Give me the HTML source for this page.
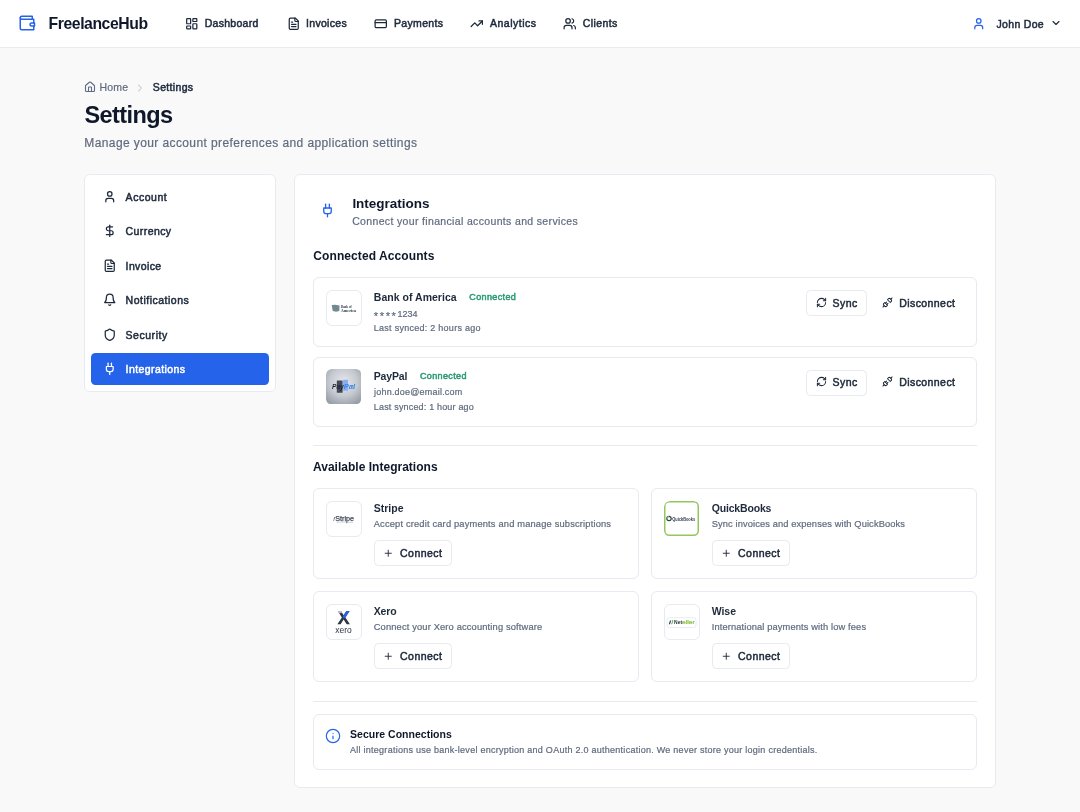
<!DOCTYPE html>
<html><head><meta charset="utf-8"><title>FreelanceHub - Settings</title>
<style>
html,body{margin:0;padding:0}
body{width:1080px;height:812px;position:relative;overflow:hidden;background:#f9f9fa;font-family:"Liberation Sans",sans-serif}
#root{position:absolute;left:0;top:0;width:1080px;height:812px;will-change:transform}
.t{position:absolute;white-space:nowrap}
.b{position:absolute}
.i{position:absolute;overflow:visible}
.logo{width:36px;height:36px;box-sizing:border-box;border:1px solid #e7eaf0;border-radius:6px;background:#fff;overflow:hidden}
</style></head><body>
<div id="root">
<div class="b" style="left:0px;top:0px;width:1080px;height:47px;background:#fff"></div>
<div class="b" style="left:0px;top:47px;width:1080px;height:1px;background:#e8eaef"></div>
<svg class="i" style="left:18.1px;top:14.4px;width:18px;height:18px" viewBox="0 0 24 24" fill="none" stroke="#2563eb" stroke-width="2" stroke-linecap="round" stroke-linejoin="round"><path d="M21 12V7H5a2 2 0 0 1 0-4h14v4"/><path d="M3 5v14a2 2 0 0 0 2 2h16v-5"/><path d="M18 12a2 2 0 0 0 0 4h4v-4Z"/></svg>
<div class="t" style="left:48.60px;top:15.57px;font-size:15.75px;line-height:15.75px;color:#0f172a;font-weight:700;letter-spacing:-0.432px;">FreelanceHub</div>
<svg class="i" style="left:185.2px;top:16.5px;width:13.5px;height:13.5px" viewBox="0 0 24 24" fill="none" stroke="#1e293b" stroke-width="2.2" stroke-linecap="round" stroke-linejoin="round"><rect width="7" height="9" x="3" y="3" rx="1"/><rect width="7" height="5" x="14" y="3" rx="1"/><rect width="7" height="9" x="14" y="12" rx="1"/><rect width="7" height="5" x="3" y="16" rx="1"/></svg>
<div class="t" style="left:204.70px;top:18.31px;font-size:10.5px;line-height:10.5px;color:#1e293b;font-weight:400;letter-spacing:0.279px;-webkit-text-stroke:0.5px #1e293b;">Dashboard</div>
<svg class="i" style="left:286.7px;top:16.5px;width:13.5px;height:13.5px" viewBox="0 0 24 24" fill="none" stroke="#1e293b" stroke-width="2.2" stroke-linecap="round" stroke-linejoin="round"><path d="M15 2H6a2 2 0 0 0-2 2v16a2 2 0 0 0 2 2h12a2 2 0 0 0 2-2V7Z"/><path d="M14 2v4a2 2 0 0 0 2 2h4"/><path d="M10 9H8"/><path d="M16 13H8"/><path d="M16 17H8"/></svg>
<div class="t" style="left:306.00px;top:18.31px;font-size:10.5px;line-height:10.5px;color:#1e293b;font-weight:400;letter-spacing:0.313px;-webkit-text-stroke:0.5px #1e293b;">Invoices</div>
<svg class="i" style="left:373.5px;top:16.5px;width:13.5px;height:13.5px" viewBox="0 0 24 24" fill="none" stroke="#1e293b" stroke-width="2.2" stroke-linecap="round" stroke-linejoin="round"><rect width="20" height="14" x="2" y="5" rx="2"/><line x1="2" x2="22" y1="10" y2="10"/></svg>
<div class="t" style="left:394.00px;top:18.31px;font-size:10.5px;line-height:10.5px;color:#1e293b;font-weight:400;letter-spacing:0.329px;-webkit-text-stroke:0.5px #1e293b;">Payments</div>
<svg class="i" style="left:470px;top:16.5px;width:13.5px;height:13.5px" viewBox="0 0 24 24" fill="none" stroke="#1e293b" stroke-width="2.2" stroke-linecap="round" stroke-linejoin="round"><polyline points="22 7 13.5 15.5 8.5 10.5 2 17"/><polyline points="16 7 22 7 22 13"/></svg>
<div class="t" style="left:490.00px;top:18.31px;font-size:10.5px;line-height:10.5px;color:#1e293b;font-weight:400;letter-spacing:0.497px;-webkit-text-stroke:0.5px #1e293b;">Analytics</div>
<svg class="i" style="left:563px;top:16.5px;width:13.5px;height:13.5px" viewBox="0 0 24 24" fill="none" stroke="#1e293b" stroke-width="2.2" stroke-linecap="round" stroke-linejoin="round"><path d="M16 21v-2a4 4 0 0 0-4-4H6a4 4 0 0 0-4 4v2"/><circle cx="9" cy="7" r="4"/><path d="M22 21v-2a4 4 0 0 0-3-3.87"/><path d="M16 3.13a4 4 0 0 1 0 7.75"/></svg>
<div class="t" style="left:582.70px;top:18.31px;font-size:10.5px;line-height:10.5px;color:#1e293b;font-weight:400;letter-spacing:0.416px;-webkit-text-stroke:0.5px #1e293b;">Clients</div>
<svg class="i" style="left:971.5px;top:16.5px;width:13.5px;height:13.5px" viewBox="0 0 24 24" fill="none" stroke="#2563eb" stroke-width="2.2" stroke-linecap="round" stroke-linejoin="round"><path d="M19 21v-2a4 4 0 0 0-4-4H9a4 4 0 0 0-4 4v2"/><circle cx="12" cy="7" r="4"/></svg>
<div class="t" style="left:996.50px;top:18.61px;font-size:10.5px;line-height:10.5px;color:#1e293b;font-weight:400;letter-spacing:0.323px;-webkit-text-stroke:0.5px #1e293b;">John Doe</div>
<svg class="i" style="left:1050px;top:17.2px;width:12px;height:12px" viewBox="0 0 24 24" fill="none" stroke="#1e293b" stroke-width="2.2" stroke-linecap="round" stroke-linejoin="round"><path d="m6 9 6 6 6-6"/></svg>
<svg class="i" style="left:83.7px;top:81.2px;width:12px;height:12px" viewBox="0 0 24 24" fill="none" stroke="#5f6b7e" stroke-width="2.2" stroke-linecap="round" stroke-linejoin="round"><path d="M15 21v-8a1 1 0 0 0-1-1h-4a1 1 0 0 0-1 1v8"/><path d="M3 10a2 2 0 0 1 .709-1.528l7-5.999a2 2 0 0 1 2.582 0l7 5.999A2 2 0 0 1 21 10v9a2 2 0 0 1-2 2H5a2 2 0 0 1-2-2z"/></svg>
<div class="t" style="left:99.40px;top:81.91px;font-size:10.5px;line-height:10.5px;color:#5f6b7e;font-weight:400;letter-spacing:0.197px;-webkit-text-stroke:0.2px #5f6b7e;">Home</div>
<svg class="i" style="left:134px;top:81.5px;width:12px;height:12px" viewBox="0 0 24 24" fill="none" stroke="#d1d5db" stroke-width="2.2" stroke-linecap="round" stroke-linejoin="round"><path d="m9 18 6-6-6-6"/></svg>
<div class="t" style="left:152.80px;top:81.91px;font-size:10.5px;line-height:10.5px;color:#1e293b;font-weight:400;letter-spacing:0.338px;-webkit-text-stroke:0.5px #1e293b;">Settings</div>
<div class="t" style="left:84.50px;top:104.41px;font-size:23.5px;line-height:23.5px;color:#0f172a;font-weight:700;letter-spacing:-0.601px;">Settings</div>
<div class="t" style="left:84.30px;top:136.94px;font-size:12px;line-height:12px;color:#5f6b7e;font-weight:400;letter-spacing:0.397px;-webkit-text-stroke:0.2px #5f6b7e;">Manage your account preferences and application settings</div>
<div class="b" style="left:84px;top:174px;width:192px;height:218px;background:#fff;border:1px solid #e7eaf0;border-radius:6px;box-sizing:border-box"></div>
<svg class="i" style="left:102.65px;top:189.75px;width:13.5px;height:13.5px" viewBox="0 0 24 24" fill="none" stroke="#1e293b" stroke-width="2.2" stroke-linecap="round" stroke-linejoin="round"><path d="M19 21v-2a4 4 0 0 0-4-4H9a4 4 0 0 0-4 4v2"/><circle cx="12" cy="7" r="4"/></svg>
<div class="t" style="left:125.60px;top:191.91px;font-size:10.5px;line-height:10.5px;color:#1e293b;font-weight:400;letter-spacing:0.528px;-webkit-text-stroke:0.5px #1e293b;">Account</div>
<svg class="i" style="left:102.65px;top:224.25px;width:13.5px;height:13.5px" viewBox="0 0 24 24" fill="none" stroke="#1e293b" stroke-width="2.2" stroke-linecap="round" stroke-linejoin="round"><line x1="12" x2="12" y1="2" y2="22"/><path d="M17 5H9.5a3.5 3.5 0 0 0 0 7h5a3.5 3.5 0 0 1 0 7H6"/></svg>
<div class="t" style="left:125.60px;top:226.41px;font-size:10.5px;line-height:10.5px;color:#1e293b;font-weight:400;letter-spacing:0.414px;-webkit-text-stroke:0.5px #1e293b;">Currency</div>
<svg class="i" style="left:102.65px;top:258.75px;width:13.5px;height:13.5px" viewBox="0 0 24 24" fill="none" stroke="#1e293b" stroke-width="2.2" stroke-linecap="round" stroke-linejoin="round"><path d="M15 2H6a2 2 0 0 0-2 2v16a2 2 0 0 0 2 2h12a2 2 0 0 0 2-2V7Z"/><path d="M14 2v4a2 2 0 0 0 2 2h4"/><path d="M10 9H8"/><path d="M16 13H8"/><path d="M16 17H8"/></svg>
<div class="t" style="left:125.60px;top:260.91px;font-size:10.5px;line-height:10.5px;color:#1e293b;font-weight:400;letter-spacing:0.374px;-webkit-text-stroke:0.5px #1e293b;">Invoice</div>
<svg class="i" style="left:102.65px;top:293.25px;width:13.5px;height:13.5px" viewBox="0 0 24 24" fill="none" stroke="#1e293b" stroke-width="2.2" stroke-linecap="round" stroke-linejoin="round"><path d="M6 8a6 6 0 0 1 12 0c0 7 3 9 3 9H3s3-2 3-9"/><path d="M10.3 21a1.94 1.94 0 0 0 3.4 0"/></svg>
<div class="t" style="left:125.60px;top:295.41px;font-size:10.5px;line-height:10.5px;color:#1e293b;font-weight:400;letter-spacing:0.500px;-webkit-text-stroke:0.5px #1e293b;">Notifications</div>
<svg class="i" style="left:102.65px;top:327.75px;width:13.5px;height:13.5px" viewBox="0 0 24 24" fill="none" stroke="#1e293b" stroke-width="2.2" stroke-linecap="round" stroke-linejoin="round"><path d="M20 13c0 5-3.5 7.5-7.66 8.95a1 1 0 0 1-.67-.01C7.5 20.5 4 18 4 13V6a1 1 0 0 1 1-1c2 0 4.5-1.2 6.24-2.72a1.17 1.17 0 0 1 1.52 0C14.510 3.81 17 5 19 5a1 1 0 0 1 1 1z"/></svg>
<div class="t" style="left:125.60px;top:329.91px;font-size:10.5px;line-height:10.5px;color:#1e293b;font-weight:400;letter-spacing:0.524px;-webkit-text-stroke:0.5px #1e293b;">Security</div>
<div class="b" style="left:91px;top:353px;width:178px;height:32px;background:#2563eb;border-radius:4.5px"></div>
<svg class="i" style="left:102.65px;top:362.25px;width:13.5px;height:13.5px" viewBox="0 0 24 24" fill="none" stroke="#fff" stroke-width="2.2" stroke-linecap="round" stroke-linejoin="round"><path d="M12 22v-5"/><path d="M9 8V2"/><path d="M15 8V2"/><path d="M18 8v5a4 4 0 0 1-4 4h-4a4 4 0 0 1-4-4V8Z"/></svg>
<div class="t" style="left:125.60px;top:364.41px;font-size:10.5px;line-height:10.5px;color:#fff;font-weight:400;letter-spacing:0.422px;-webkit-text-stroke:0.5px #fff;">Integrations</div>
<div class="b" style="left:294px;top:174px;width:702px;height:614px;background:#fff;border:1px solid #e7eaf0;border-radius:6px;box-sizing:border-box"></div>
<svg class="i" style="left:320.2px;top:203.4px;width:15px;height:15px" viewBox="0 0 24 24" fill="none" stroke="#2563eb" stroke-width="2.1" stroke-linecap="round" stroke-linejoin="round"><path d="M12 22v-5"/><path d="M9 8V2"/><path d="M15 8V2"/><path d="M18 8v5a4 4 0 0 1-4 4h-4a4 4 0 0 1-4-4V8Z"/></svg>
<div class="t" style="left:352.40px;top:196.67px;font-size:13.5px;line-height:13.5px;color:#0f172a;font-weight:700;letter-spacing:-0.023px;">Integrations</div>
<div class="t" style="left:352.20px;top:216.31px;font-size:10.5px;line-height:10.5px;color:#5f6b7e;font-weight:400;letter-spacing:0.344px;-webkit-text-stroke:0.2px #5f6b7e;">Connect your financial accounts and services</div>
<div class="t" style="left:313.30px;top:250.24px;font-size:12px;line-height:12px;color:#0f172a;font-weight:700;letter-spacing:0.089px;">Connected Accounts</div>
<div class="b" style="left:313px;top:277px;width:664px;height:70px;background:#fff;border:1px solid #e7eaf0;border-radius:6px;box-sizing:border-box"></div>
<div class="b logo" style="left:326px;top:289.5px;"><svg style="position:absolute;left:-1px;top:-1px" width="36" height="36" viewBox="0 0 36 36"><g transform="translate(-0.3,0.5)"><path d="M6 14.6 L9.5 14.2 L13.8 15 L13.6 20.6 L10.5 21.2 L7 20.4 Z" fill="#7c8593"/><rect x="8.3" y="16.4" width="1.6" height="1.4" fill="#3aa57a"/><rect x="10.8" y="17.4" width="1.6" height="1.2" fill="#3aa57a"/><rect x="9.3" y="19" width="1.4" height="1.2" fill="#3aa57a"/><text x="15" y="17.6" font-family="Liberation Serif" font-weight="700" font-size="3.6" fill="#2d3a4a" textLength="11" lengthAdjust="spacingAndGlyphs">Bank of</text><text x="15" y="21.2" font-family="Liberation Serif" font-weight="700" font-size="3.6" fill="#2d3a4a" textLength="15.5" lengthAdjust="spacingAndGlyphs">America</text></g></svg></div>
<div class="t" style="left:373.80px;top:291.91px;font-size:10.5px;line-height:10.5px;color:#1e293b;font-weight:700;letter-spacing:0.026px;">Bank of America</div>
<div class="t" style="left:469.30px;top:292.78px;font-size:9px;line-height:9px;color:#2a9a72;font-weight:400;letter-spacing:0.370px;-webkit-text-stroke:0.5px #2a9a72;">Connected</div>
<div class="t" style="left:373.80px;top:308.78px;font-size:9px;line-height:9px;color:#5f6b7e;font-weight:400;letter-spacing:0.000px;-webkit-text-stroke:0.2px #5f6b7e;"><span style="font-size:11px;letter-spacing:1.65px;position:relative;top:3px">****</span>1234</div>
<div class="t" style="left:373.80px;top:323.73px;font-size:9px;line-height:9px;color:#5f6b7e;font-weight:400;letter-spacing:0.266px;-webkit-text-stroke:0.2px #5f6b7e;">Last synced: 2 hours ago</div>
<div class="b" style="left:806px;top:290px;width:61px;height:26.3px;background:#fff;border:1px solid #e7eaf0;border-radius:4.5px;box-sizing:border-box"></div>
<svg class="i" style="left:815.5px;top:296.5px;width:11px;height:11px" viewBox="0 0 24 24" fill="none" stroke="#1e293b" stroke-width="2.2" stroke-linecap="round" stroke-linejoin="round"><path d="M3 12a9 9 0 0 1 9-9 9.75 9.75 0 0 1 6.74 2.740L21 8"/><path d="M21 3v5h-5"/><path d="M21 12a9 9 0 0 1-9 9 9.75 9.75 0 0 1-6.74-2.74L3 16"/><path d="M8 16H3v5"/></svg>
<div class="t" style="left:832.50px;top:297.61px;font-size:10.5px;line-height:10.5px;color:#1e293b;font-weight:400;letter-spacing:0.455px;-webkit-text-stroke:0.5px #1e293b;">Sync</div>
<svg class="i" style="left:881.5px;top:296.5px;width:11px;height:11px" viewBox="0 0 24 24" fill="none" stroke="#1e293b" stroke-width="2.2" stroke-linecap="round" stroke-linejoin="round"><path d="m19 5 3-3"/><path d="m2 22 3-3"/><path d="M6.3 20.3a2.4 2.4 0 0 0 3.4 0L12 18l-6-6-2.3 2.3a2.4 2.4 0 0 0 0 3.4Z"/><path d="M7.5 13.5 10 11"/><path d="M10.5 16.5 13 14"/><path d="m12 6 6 6 2.3-2.3a2.4 2.4 0 0 0 0-3.4l-2.6-2.6a2.4 2.4 0 0 0-3.4 0Z"/></svg>
<div class="t" style="left:899.20px;top:297.61px;font-size:10.5px;line-height:10.5px;color:#1e293b;font-weight:400;letter-spacing:0.428px;-webkit-text-stroke:0.5px #1e293b;">Disconnect</div>
<div class="b" style="left:313px;top:356.5px;width:664px;height:70px;background:#fff;border:1px solid #e7eaf0;border-radius:6px;box-sizing:border-box"></div>
<div class="b logo" style="left:326px;top:369.0px;border:none;background:transparent;"><svg style="position:absolute;left:0px;top:0px" width="36" height="36" viewBox="0 0 36 36"><defs><radialGradient id="ppg" cx="50%" cy="38%" r="78%"><stop offset="0" stop-color="#e6e8ec"/><stop offset="0.5" stop-color="#c6cad1"/><stop offset="1" stop-color="#8d939c"/></radialGradient></defs><rect x="0" y="0" width="35" height="35" rx="4.5" fill="url(#ppg)"/><rect x="10.8" y="11.4" width="5.8" height="12.4" rx="0.6" fill="#444a56"/><rect x="17.1" y="10.8" width="4.9" height="10.9" rx="0.5" fill="#86aef0"/><text x="6" y="20" font-family="Liberation Sans" font-weight="700" font-style="italic" font-size="8" fill="#1f2633" textLength="11.7" lengthAdjust="spacingAndGlyphs">Pay</text><text x="17.7" y="20" font-family="Liberation Sans" font-weight="700" font-style="italic" font-size="7.4" fill="#3b82f6" textLength="11.4" lengthAdjust="spacingAndGlyphs">Pal</text><rect x="20" y="17" width="1.2" height="1.2" fill="#3aa57a"/><rect x="26" y="16" width="1.2" height="1.2" fill="#3aa57a"/></svg></div>
<div class="t" style="left:373.80px;top:371.41px;font-size:10.5px;line-height:10.5px;color:#1e293b;font-weight:700;letter-spacing:-0.188px;">PayPal</div>
<div class="t" style="left:420.00px;top:372.28px;font-size:9px;line-height:9px;color:#2a9a72;font-weight:400;letter-spacing:0.370px;-webkit-text-stroke:0.5px #2a9a72;">Connected</div>
<div class="t" style="left:374.03px;top:388.28px;font-size:9px;line-height:9px;color:#5f6b7e;font-weight:400;letter-spacing:0.211px;-webkit-text-stroke:0.2px #5f6b7e;">john.doe@email.com</div>
<div class="t" style="left:373.80px;top:403.23px;font-size:9px;line-height:9px;color:#5f6b7e;font-weight:400;letter-spacing:0.178px;-webkit-text-stroke:0.2px #5f6b7e;">Last synced: 1 hour ago</div>
<div class="b" style="left:806px;top:369.5px;width:61px;height:26.3px;background:#fff;border:1px solid #e7eaf0;border-radius:4.5px;box-sizing:border-box"></div>
<svg class="i" style="left:815.5px;top:376.0px;width:11px;height:11px" viewBox="0 0 24 24" fill="none" stroke="#1e293b" stroke-width="2.2" stroke-linecap="round" stroke-linejoin="round"><path d="M3 12a9 9 0 0 1 9-9 9.75 9.75 0 0 1 6.74 2.740L21 8"/><path d="M21 3v5h-5"/><path d="M21 12a9 9 0 0 1-9 9 9.75 9.75 0 0 1-6.74-2.74L3 16"/><path d="M8 16H3v5"/></svg>
<div class="t" style="left:832.50px;top:377.11px;font-size:10.5px;line-height:10.5px;color:#1e293b;font-weight:400;letter-spacing:0.455px;-webkit-text-stroke:0.5px #1e293b;">Sync</div>
<svg class="i" style="left:881.5px;top:376.0px;width:11px;height:11px" viewBox="0 0 24 24" fill="none" stroke="#1e293b" stroke-width="2.2" stroke-linecap="round" stroke-linejoin="round"><path d="m19 5 3-3"/><path d="m2 22 3-3"/><path d="M6.3 20.3a2.4 2.4 0 0 0 3.4 0L12 18l-6-6-2.3 2.3a2.4 2.4 0 0 0 0 3.4Z"/><path d="M7.5 13.5 10 11"/><path d="M10.5 16.5 13 14"/><path d="m12 6 6 6 2.3-2.3a2.4 2.4 0 0 0 0-3.4l-2.6-2.6a2.4 2.4 0 0 0-3.4 0Z"/></svg>
<div class="t" style="left:899.20px;top:377.11px;font-size:10.5px;line-height:10.5px;color:#1e293b;font-weight:400;letter-spacing:0.428px;-webkit-text-stroke:0.5px #1e293b;">Disconnect</div>
<div class="b" style="left:313px;top:444.5px;width:664px;height:1px;background:#e7eaf0"></div>
<div class="t" style="left:313.00px;top:460.84px;font-size:12px;line-height:12px;color:#0f172a;font-weight:700;letter-spacing:0.016px;">Available Integrations</div>
<div class="b" style="left:313px;top:488px;width:326px;height:91px;background:#fff;border:1px solid #e7eaf0;border-radius:6px;box-sizing:border-box"></div>
<div class="b logo" style="left:326px;top:500.5px;"><svg style="position:absolute;left:-1px;top:-1px" width="36" height="36" viewBox="0 0 36 36"><text x="7.2" y="19.5" font-family="Liberation Sans" font-style="italic" font-size="6" fill="#3f4656">f</text><text x="9.3" y="19.5" font-family="Liberation Sans" font-size="7.6" fill="#3f4656" textLength="18.7" lengthAdjust="spacingAndGlyphs" stroke="#3f4656" stroke-width="0.25">Stripe</text><path d="M10.5 21.3 Q18 20.5 27 21.5" stroke="#9aa0aa" stroke-width="0.45" fill="none"/></svg></div>
<div class="t" style="left:373.70px;top:503.11px;font-size:10.5px;line-height:10.5px;color:#1e293b;font-weight:700;letter-spacing:0.007px;">Stripe</div>
<div class="t" style="left:373.70px;top:520.13px;font-size:9.3px;line-height:9.3px;color:#5f6b7e;font-weight:400;letter-spacing:0.174px;-webkit-text-stroke:0.2px #5f6b7e;">Accept credit card payments and manage subscriptions</div>
<div class="b" style="left:373.6px;top:540px;width:78px;height:26px;background:#fff;border:1px solid #e7eaf0;border-radius:4.5px;box-sizing:border-box"></div>
<svg class="i" style="left:383.05px;top:547.55px;width:10.5px;height:10.5px" viewBox="0 0 24 24" fill="none" stroke="#1e293b" stroke-width="2.1" stroke-linecap="round" stroke-linejoin="round"><path d="M5 12h14"/><path d="M12 5v14"/></svg>
<div class="t" style="left:400.00px;top:548.11px;font-size:10.5px;line-height:10.5px;color:#1e293b;font-weight:400;letter-spacing:0.481px;-webkit-text-stroke:0.5px #1e293b;">Connect</div>
<div class="b" style="left:651px;top:488px;width:326px;height:91px;background:#fff;border:1px solid #e7eaf0;border-radius:6px;box-sizing:border-box"></div>
<div class="b logo" style="left:664px;top:500.5px;border:none;background:transparent;"><svg style="position:absolute;left:0px;top:0px" width="36" height="36" viewBox="0 0 36 36"><rect x="0.75" y="0.75" width="33.5" height="33.5" rx="4.5" fill="#fff" stroke="#93c560" stroke-width="1.5"/><circle cx="5" cy="17.5" r="2.2" fill="none" stroke="#2f3a4a" stroke-width="1.2"/><path d="M3 17.5 a2 2 0 0 1 2-2" stroke="#7fb84a" stroke-width="1.2" fill="none"/><text x="8.3" y="19.8" font-family="Liberation Sans" font-weight="700" font-size="5" fill="#2f3a4a" textLength="22.8" lengthAdjust="spacingAndGlyphs">QuickBooks</text></svg></div>
<div class="t" style="left:711.70px;top:503.11px;font-size:10.5px;line-height:10.5px;color:#1e293b;font-weight:700;letter-spacing:-0.174px;">QuickBooks</div>
<div class="t" style="left:711.70px;top:520.13px;font-size:9.3px;line-height:9.3px;color:#5f6b7e;font-weight:400;letter-spacing:0.113px;-webkit-text-stroke:0.2px #5f6b7e;">Sync invoices and expenses with QuickBooks</div>
<div class="b" style="left:711.6px;top:540px;width:78px;height:26px;background:#fff;border:1px solid #e7eaf0;border-radius:4.5px;box-sizing:border-box"></div>
<svg class="i" style="left:721.05px;top:547.55px;width:10.5px;height:10.5px" viewBox="0 0 24 24" fill="none" stroke="#1e293b" stroke-width="2.1" stroke-linecap="round" stroke-linejoin="round"><path d="M5 12h14"/><path d="M12 5v14"/></svg>
<div class="t" style="left:738.00px;top:548.11px;font-size:10.5px;line-height:10.5px;color:#1e293b;font-weight:400;letter-spacing:0.481px;-webkit-text-stroke:0.5px #1e293b;">Connect</div>
<div class="b" style="left:313px;top:591px;width:326px;height:91px;background:#fff;border:1px solid #e7eaf0;border-radius:6px;box-sizing:border-box"></div>
<div class="b logo" style="left:326px;top:603.5px;"><svg style="position:absolute;left:-1px;top:-1px" width="36" height="36" viewBox="0 0 36 36"><path d="M11.4 20.2 L15.9 13.4 L11.8 6.9 L15 6.9 L17.6 11.2 L20.4 6.9 L23.6 6.9 L19.4 13.4 L23.9 20.2 L20.7 20.2 L17.6 15.5 L14.6 20.2 Z" fill="#2d3442"/><path d="M17.6 11.2 L20.4 6.9 L23.6 6.9 L19.4 13.4 L17.4 14.6 L16.8 12.4 Z" fill="#2563eb"/><path d="M11.8 6.9 L15 6.9 L16.2 8.9 L13 9.3 Z" fill="#b9bec7"/><text x="9.3" y="28.8" font-family="Liberation Sans" font-size="8.6" fill="#2d3442" textLength="16.5" lengthAdjust="spacingAndGlyphs">xero</text></svg></div>
<div class="t" style="left:373.70px;top:606.41px;font-size:10.5px;line-height:10.5px;color:#1e293b;font-weight:700;letter-spacing:-0.112px;">Xero</div>
<div class="t" style="left:373.70px;top:623.43px;font-size:9.3px;line-height:9.3px;color:#5f6b7e;font-weight:400;letter-spacing:0.160px;-webkit-text-stroke:0.2px #5f6b7e;">Connect your Xero accounting software</div>
<div class="b" style="left:373.6px;top:643px;width:78px;height:26px;background:#fff;border:1px solid #e7eaf0;border-radius:4.5px;box-sizing:border-box"></div>
<svg class="i" style="left:383.05px;top:650.55px;width:10.5px;height:10.5px" viewBox="0 0 24 24" fill="none" stroke="#1e293b" stroke-width="2.1" stroke-linecap="round" stroke-linejoin="round"><path d="M5 12h14"/><path d="M12 5v14"/></svg>
<div class="t" style="left:400.00px;top:651.11px;font-size:10.5px;line-height:10.5px;color:#1e293b;font-weight:400;letter-spacing:0.481px;-webkit-text-stroke:0.5px #1e293b;">Connect</div>
<div class="b" style="left:651px;top:591px;width:326px;height:91px;background:#fff;border:1px solid #e7eaf0;border-radius:6px;box-sizing:border-box"></div>
<div class="b logo" style="left:664px;top:603.5px;"><svg style="position:absolute;left:-1px;top:-1px" width="36" height="36" viewBox="0 0 36 36"><g transform="translate(0.6,0.9)"><rect x="2.3" y="12.8" width="29.2" height="9.8" rx="2.6" fill="#fff" stroke="#e3e6ec" stroke-width="0.8"/><path d="M4.2 19.4 L5.4 15.6 L6.6 15.6 L5.4 19.4 Z" fill="#2d3442"/><path d="M6.6 19.4 L7.8 15.2 L8.8 15.2 L7.6 19.4 Z" fill="#5bb04a"/><text x="9.5" y="19.6" font-family="Liberation Sans" font-weight="700" font-size="5" fill="#2d3442" textLength="8" lengthAdjust="spacingAndGlyphs">Net</text><text x="17.5" y="19.6" font-family="Liberation Sans" font-size="5" fill="#8cc34a" stroke="#8cc34a" stroke-width="0.2" textLength="12.7" lengthAdjust="spacingAndGlyphs">eller</text></g></svg></div>
<div class="t" style="left:711.70px;top:606.41px;font-size:10.5px;line-height:10.5px;color:#1e293b;font-weight:700;letter-spacing:-0.038px;">Wise</div>
<div class="t" style="left:711.70px;top:623.43px;font-size:9.3px;line-height:9.3px;color:#5f6b7e;font-weight:400;letter-spacing:0.128px;-webkit-text-stroke:0.2px #5f6b7e;">International payments with low fees</div>
<div class="b" style="left:711.6px;top:643px;width:78px;height:26px;background:#fff;border:1px solid #e7eaf0;border-radius:4.5px;box-sizing:border-box"></div>
<svg class="i" style="left:721.05px;top:650.55px;width:10.5px;height:10.5px" viewBox="0 0 24 24" fill="none" stroke="#1e293b" stroke-width="2.1" stroke-linecap="round" stroke-linejoin="round"><path d="M5 12h14"/><path d="M12 5v14"/></svg>
<div class="t" style="left:738.00px;top:651.11px;font-size:10.5px;line-height:10.5px;color:#1e293b;font-weight:400;letter-spacing:0.481px;-webkit-text-stroke:0.5px #1e293b;">Connect</div>
<div class="b" style="left:313px;top:701px;width:664px;height:1px;background:#e7eaf0"></div>
<div class="b" style="left:313px;top:714px;width:664px;height:55.5px;background:#fff;border:1px solid #e7eaf0;border-radius:6px;box-sizing:border-box"></div>
<svg class="i" style="left:324.9px;top:727.5px;width:16px;height:16px" viewBox="0 0 24 24" fill="none" stroke="#2563eb" stroke-width="1.8" stroke-linecap="round" stroke-linejoin="round"><circle cx="12" cy="12" r="10"/><path d="M12 16v-4"/><path d="M12 8h.01"/></svg>
<div class="t" style="left:350.00px;top:729.11px;font-size:10.5px;line-height:10.5px;color:#0f172a;font-weight:700;letter-spacing:0.016px;">Secure Connections</div>
<div class="t" style="left:350.00px;top:745.68px;font-size:9px;line-height:9px;color:#5f6b7e;font-weight:400;letter-spacing:0.261px;-webkit-text-stroke:0.2px #5f6b7e;">All integrations use bank-level encryption and OAuth 2.0 authentication. We never store your login credentials.</div>
</div>
</body></html>
